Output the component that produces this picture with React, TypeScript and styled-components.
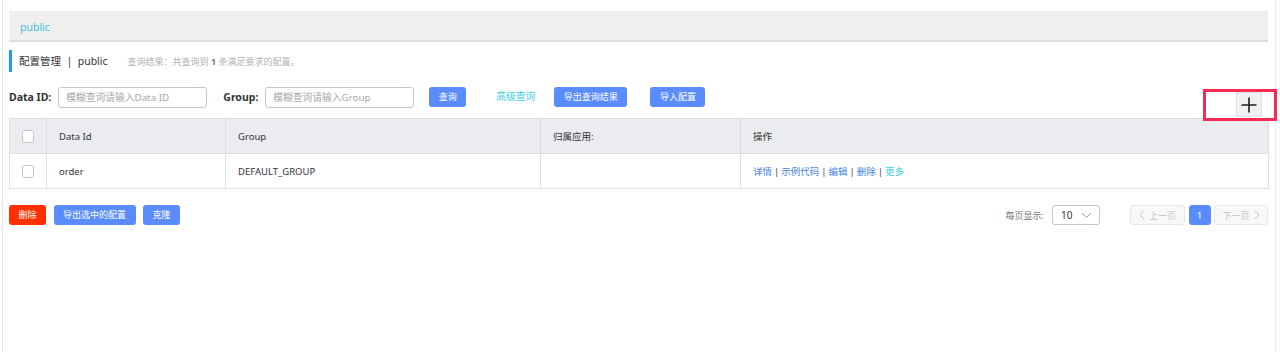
import React from "react";
import styled, { createGlobalStyle } from "styled-components";

const Global = createGlobalStyle`
  html, body { margin: 0; padding: 0; background: #fff; }
  body { font-family: "Noto Sans", "Noto Sans CJK SC", sans-serif; color: #333; }
  * { box-sizing: border-box; }
`;

const Frame = styled.div`
  margin-left: 2px;
  width: 1274px;
  height: 352px;
  border-left: 1px solid #e6e6e6;
  border-right: 1px solid #ececec;
  padding: 11px 7px 0 6px;
`;

const TopBar = styled.div`
  height: 31px;
  background: #efefef;
  border-bottom: 2px solid #dedede;
  display: flex;
  align-items: center;
  padding: 3px 0 0 11px;
  font-size: 10.5px;
  color: #3cc3dd;
`;

const TitleRow = styled.div`
  margin-top: 8px;
  height: 22px;
  border-left: 3px solid #1f9cf0;
  padding-left: 7px;
  display: flex;
  align-items: center;
`;

const Title = styled.span`
  font-size: 10.5px;
  color: #333;
  white-space: pre;
  margin-top: -1px;
`;

const SubText = styled.span`
  margin-left: 20px;
  font-size: 9px;
  color: #b3b3b3;
  b { color: #777; }
`;

const SearchRow = styled.div`
  margin-top: 15px;
  display: flex;
  align-items: flex-start;
`;

const Label = styled.span<{ $ml?: number }>`
  font-size: 10.5px;
  font-weight: bold;
  color: #333;
  line-height: 21px;
  margin-left: ${(p) => p.$ml ?? 0}px;
  margin-right: 7px;
`;

const Input = styled.input`
  width: 149px;
  height: 21px;
  border: 1px solid #c4c6cf;
  border-radius: 3px;
  padding: 0 7px;
  font-family: inherit;
  font-size: 9.75px;
  color: #333;
  outline: none;
  &::placeholder { color: #a8a8a8; }
`;

const Button = styled.button<{ $variant?: "primary" | "danger"; $ml?: number }>`
  height: 20px;
  padding: 0 9.5px;
  border: none;
  border-radius: 3px;
  font-family: inherit;
  font-size: 9px;
  line-height: 20px;
  color: #fff;
  background: ${(p) => (p.$variant === "danger" ? "#ff3000" : "#5a8cff")};
  margin-left: ${(p) => p.$ml ?? 0}px;
  cursor: pointer;
`;

const LinkText = styled.span<{ $ml?: number }>`
  font-size: 9.75px;
  color: #3dcbe3;
  line-height: 20px;
  margin-left: ${(p) => p.$ml ?? 0}px;
`;

const PlusWrap = styled.div`
  position: relative;
  margin-left: auto;
  margin-top: 5px;
  margin-right: 6px;
`;

const PlusButton = styled.button`
  width: 26px;
  height: 25px;
  background: #f0f0f0;
  border: 1px solid #e3e3e3;
  padding: 0;
  display: flex;
  align-items: center;
  justify-content: center;
`;

const Highlight = styled.div`
  position: absolute;
  top: -3px;
  left: -33px;
  right: -15px;
  bottom: -4px;
  border: 3px solid #f62a52;
  pointer-events: none;
`;

const Table = styled.table`
  margin-top: 1px;
  width: 1259px;
  border-collapse: collapse;
  table-layout: fixed;
  font-size: 9.5px;
  color: #333;
`;

const Th = styled.th<{ $w: number }>`
  width: ${(p) => p.$w}px;
  height: 35px;
  background: #ebecf0;
  border: 1px solid #dcdee3;
  text-align: left;
  font-weight: normal;
  padding: 0 12px;
`;

const Td = styled.td`
  height: 35px;
  border: 1px solid #dcdee3;
  padding: 0 12px;
`;

const CheckCell = styled.div`
  display: flex;
  justify-content: center;
`;

const Checkbox = styled.span`
  display: inline-block;
  width: 13px;
  height: 13px;
  border: 1px solid #c4c6cf;
  border-radius: 3px;
  background: #fff;
`;

const OpLink = styled.span<{ $cyan?: boolean }>`
  color: ${(p) => (p.$cyan ? "#3dcbe3" : "#3f83e4")};
`;

const Sep = styled.span`
  color: #444;
  margin: 0 2px;
`;

const BottomRow = styled.div`
  margin-top: 16px;
  display: flex;
  align-items: center;
  justify-content: space-between;
`;

const Group = styled.div<{ $gap: number }>`
  display: flex;
  align-items: center;
  gap: ${(p) => p.$gap}px;
`;

const PageLabel = styled.span`
  font-size: 9px;
  color: #777;
`;

const Select = styled.div`
  margin-left: 8px;
  width: 48px;
  height: 20px;
  border: 1px solid #c4c6cf;
  border-radius: 3px;
  display: flex;
  align-items: center;
  justify-content: space-between;
  padding: 0 7px 0 8px;
  font-size: 10px;
  color: #333;
`;

const Pager = styled.div`
  margin-left: 30px;
  display: flex;
  gap: 3.5px;
`;

const PageBtn = styled.div<{ $active?: boolean; $w: number }>`
  width: ${(p) => p.$w}px;
  height: 20px;
  border-radius: 3px;
  display: flex;
  align-items: center;
  justify-content: center;
  gap: 4px;
  font-size: 9px;
  color: ${(p) => (p.$active ? "#fff" : "#c4c4c4")};
  background: ${(p) => (p.$active ? "#5a8cff" : "#f7f8fa")};
  border: 1px solid ${(p) => (p.$active ? "#5a8cff" : "#e6e7eb")};
`;

const Chevron = ({ dir, color }: { dir: "left" | "right" | "down"; color: string }) => {
  const pts =
    dir === "left" ? "5,1 1,5 5,9" : dir === "right" ? "1,1 5,5 1,9" : "1,1 5.5,5.5 10,1";
  const w = dir === "down" ? 11 : 6;
  const h = dir === "down" ? 7 : 10;
  return (
    <svg width={w} height={h} viewBox={`0 0 ${w} ${h}`}>
      <polyline points={pts} fill="none" stroke={color} strokeWidth="1" />
    </svg>
  );
};

const columns = [
  { w: 37, label: "" },
  { w: 179, label: "Data Id" },
  { w: 315, label: "Group" },
  { w: 200, label: "归属应用:" },
  { w: 528, label: "操作" },
];

export default function App() {
  const ops = ["详情", "示例代码", "编辑", "删除"];
  return (
    <>
      <Global />
      <Frame>
        <TopBar>public</TopBar>
        <TitleRow>
          <Title>配置管理  |  public</Title>
          <SubText>
            查询结果：共查询到 <b>1</b> 条满足要求的配置。
          </SubText>
        </TitleRow>
        <SearchRow>
          <Label>Data ID:</Label>
          <Input placeholder="模糊查询请输入Data ID" />
          <Label $ml={16}>Group:</Label>
          <Input placeholder="模糊查询请输入Group" />
          <Button $ml={15}>查询</Button>
          <LinkText $ml={30}>高级查询</LinkText>
          <Button $ml={19}>导出查询结果</Button>
          <Button $ml={23}>导入配置</Button>
          <PlusWrap>
            <PlusButton>
              <svg width="16" height="16" viewBox="0 0 16 16">
                <path d="M8 0.5V15.5M0.5 8H15.5" stroke="#1b1b1b" strokeWidth="1.6" />
              </svg>
            </PlusButton>
            <Highlight />
          </PlusWrap>
        </SearchRow>
        <Table>
          <thead>
            <tr>
              {columns.map((c, i) => (
                <Th key={i} $w={c.w}>
                  {i === 0 ? (
                    <CheckCell>
                      <Checkbox />
                    </CheckCell>
                  ) : (
                    c.label
                  )}
                </Th>
              ))}
            </tr>
          </thead>
          <tbody>
            <tr>
              <Td>
                <CheckCell>
                  <Checkbox />
                </CheckCell>
              </Td>
              <Td>order</Td>
              <Td>DEFAULT_GROUP</Td>
              <Td></Td>
              <Td>
                {ops.map((o) => (
                  <React.Fragment key={o}>
                    <OpLink>{o}</OpLink>
                    <Sep>|</Sep>
                  </React.Fragment>
                ))}
                <OpLink $cyan>更多</OpLink>
              </Td>
            </tr>
          </tbody>
        </Table>
        <BottomRow>
          <Group $gap={7.5}>
            <Button $variant="danger">删除</Button>
            <Button>导出选中的配置</Button>
            <Button>克隆</Button>
          </Group>
          <Group $gap={0}>
            <PageLabel>每页显示:</PageLabel>
            <Select>
              <span>10</span>
              <Chevron dir="down" color="#999" />
            </Select>
            <Pager>
              <PageBtn $w={55}>
                <Chevron dir="left" color="#c4c4c4" />
                上一页
              </PageBtn>
              <PageBtn $w={22} $active>
                1
              </PageBtn>
              <PageBtn $w={54}>
                下一页
                <Chevron dir="right" color="#c4c4c4" />
              </PageBtn>
            </Pager>
          </Group>
        </BottomRow>
      </Frame>
    </>
  );
}
